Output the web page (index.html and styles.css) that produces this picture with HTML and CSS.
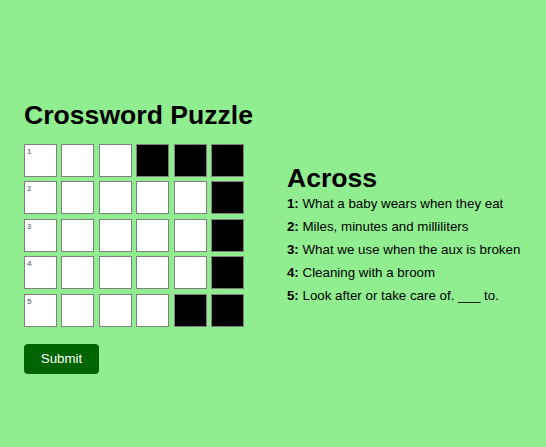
FILE: index.html
```html
<!DOCTYPE html>
<html>
<head>
<meta charset="utf-8">
<title>Crossword Puzzle</title>
<link rel="stylesheet" href="styles.css">
</head>
<body>
<main class="page">
  <h1 class="title">Crossword Puzzle</h1>
  <div class="board">
    <div class="grid">
      <div class="cell"><span class="num">1</span></div>
      <div class="cell"></div>
      <div class="cell"></div>
      <div class="cell black"></div>
      <div class="cell black"></div>
      <div class="cell black"></div>

      <div class="cell"><span class="num">2</span></div>
      <div class="cell"></div>
      <div class="cell"></div>
      <div class="cell"></div>
      <div class="cell"></div>
      <div class="cell black"></div>

      <div class="cell"><span class="num">3</span></div>
      <div class="cell"></div>
      <div class="cell"></div>
      <div class="cell"></div>
      <div class="cell"></div>
      <div class="cell black"></div>

      <div class="cell"><span class="num">4</span></div>
      <div class="cell"></div>
      <div class="cell"></div>
      <div class="cell"></div>
      <div class="cell"></div>
      <div class="cell black"></div>

      <div class="cell"><span class="num">5</span></div>
      <div class="cell"></div>
      <div class="cell"></div>
      <div class="cell"></div>
      <div class="cell black"></div>
      <div class="cell black"></div>
    </div>
    <section class="clues">
      <h2 class="clues-title">Across</h2>
      <p class="clue"><b>1:</b> What a baby wears when they eat</p>
      <p class="clue"><b>2:</b> Miles, minutes and milliliters</p>
      <p class="clue"><b>3:</b> What we use when the aux is broken</p>
      <p class="clue"><b>4:</b> Cleaning with a broom</p>
      <p class="clue"><b>5:</b> Look after or take care of. ___ to.</p>
    </section>
  </div>
  <button class="submit" type="button">Submit</button>
</main>
</body>
</html>
```

FILE: styles.css
```css
html, body {
  margin: 0;
  padding: 0;
}

body {
  background: #90ee90;
  font-family: "Liberation Sans", Arial, sans-serif;
  color: #000;
}

.page {
  padding: 100px 24px 0 24px;
}

.title {
  margin: 0;
  font-size: 26.6px;
  line-height: 30px;
  font-weight: bold;
}

.board {
  display: flex;
  align-items: flex-start;
  gap: 43px;
  margin-top: 14px;
}

.grid {
  display: grid;
  grid-template-columns: repeat(6, 33px);
  grid-auto-rows: 33px;
  gap: 4.4px;
}

.cell {
  position: relative;
  box-sizing: border-box;
  background: #fff;
  border: 1px solid #808080;
}

.cell.black {
  background: #000;
}

.num {
  position: absolute;
  top: 3px;
  left: 2px;
  font-size: 8px;
  line-height: 8px;
  font-weight: bold;
  color: #7d8590;
}

.clues {
  margin-top: 20px;
}

.clues-title {
  margin: 0;
  font-size: 26.6px;
  line-height: 28px;
  font-weight: bold;
}

.clue {
  margin: 0;
  font-size: 13.33px;
  line-height: 23px;
}

.submit {
  display: block;
  margin-top: 17.4px;
  width: 75px;
  height: 30px;
  padding: 0;
  border: none;
  border-radius: 4px;
  background: #006400;
  color: #fff;
  font-family: "Liberation Sans", Arial, sans-serif;
  font-size: 13.33px;
  line-height: 30px;
}
```
